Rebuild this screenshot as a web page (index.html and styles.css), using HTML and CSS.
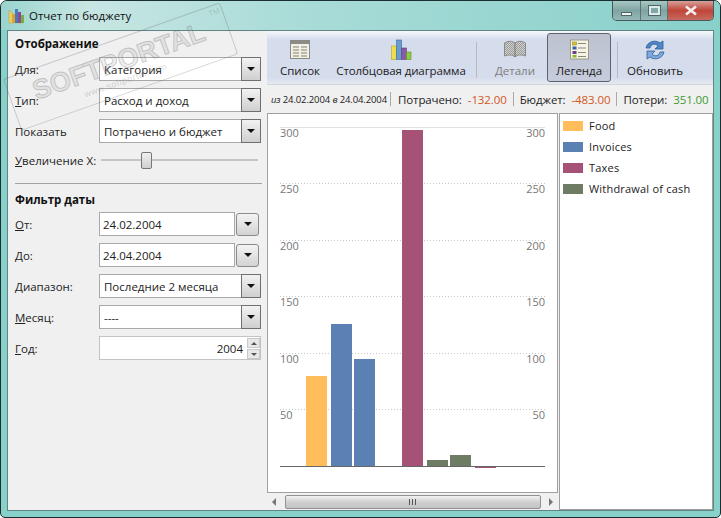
FILE: index.html
```html
<!DOCTYPE html>
<html lang="ru">
<head>
<meta charset="utf-8">
<title>Отчет по бюджету</title>
<link rel="stylesheet" href="styles.css">
</head>
<body>
<div class="window">
  <header class="titlebar">
    <svg class="app-icon" width="18" height="18" viewBox="0 0 18 18"><path d="M1 3v13h14z" fill="#e8d060" stroke="#b8a040" stroke-width=".5"/><rect x="4" y="7" width="3" height="9" fill="#e0a030"/><rect x="7" y="2" width="3" height="14" fill="#4a78b8"/><rect x="10" y="5" width="3" height="11" fill="#8a4a9a"/><rect x="13" y="8" width="3" height="8" fill="#78b040"/></svg>
    <span class="title-text">Отчет по бюджету</span>
    <div class="caption">
      <span class="cap cap-min"><i></i></span>
      <span class="cap cap-max"><i></i></span>
      <span class="cap cap-close">
        <svg width="14" height="11" viewBox="0 0 14 11"><path d="M2 1.500l10 8M12 1.500l-10 8" stroke="#f4eeee" stroke-width="2.600"/></svg>
      </span>
    </div>
  </header>
  <div class="client">
    <aside class="sidebar">
      <h2 class="group-title">Отображение</h2>
      <div class="row"><label class="lbl"><u>Д</u>ля:</label><div class="combo"><span>Категория</span><b class="arrow"></b></div></div>
      <div class="row"><label class="lbl"><u>Т</u>ип:</label><div class="combo"><span>Расход и доход</span><b class="arrow"></b></div></div>
      <div class="row"><label class="lbl">Показать</label><div class="combo"><span>Потрачено и бюджет</span><b class="arrow"></b></div></div>
      <div class="row row-slider"><label class="lbl lbl-wide"><u>У</u>величение X:</label><div class="slider"><i class="thumb"></i></div></div>
      <hr class="divider">
      <h2 class="group-title title-2">Фильтр даты</h2>
      <div class="row"><label class="lbl"><u>О</u>т:</label><div class="date"><span>24.02.2004</span></div><b class="date-btn"></b></div>
      <div class="row"><label class="lbl"><u>Д</u>о:</label><div class="date"><span>24.04.2004</span></div><b class="date-btn"></b></div>
      <div class="row"><label class="lbl"><u>Д</u>иапазон:</label><div class="combo"><span>Последние 2 месяца</span><b class="arrow"></b></div></div>
      <div class="row"><label class="lbl"><u>М</u>есяц:</label><div class="combo"><span>----</span><b class="arrow"></b></div></div>
      <div class="row"><label class="lbl"><u>Г</u>од:</label><div class="spin"><span>2004</span><div class="spin-btns"><b class="up"></b><b class="down"></b></div></div></div>
    </aside>
    <main class="main">
      <nav class="toolbar">
        <div class="tool tool-list">
          <svg width="22" height="21" viewBox="0 0 22 21"><rect x="1.500" y="1.500" width="19" height="18" fill="#f2f0e6" stroke="#8b8b85"/><rect x="2" y="2" width="18" height="3" fill="#8c8c86"/><path d="M4 8h6M12 8h6M4 11h6M12 11h6M4 14h6M12 14h6M4 17h6M12 17h6" stroke="#a8a898" stroke-width="1.500"/></svg>
          <span>Список</span>
        </div>
        <div class="tool tool-chart">
          <svg width="22" height="21" viewBox="0 0 22 21"><rect x="1.500" y="7" width="5" height="13.500" fill="#f0dc50" stroke="#b0a030" stroke-width=".6"/><rect x="6.500" y="1" width="5" height="19.500" fill="#6a9cd0" stroke="#3a6a9a" stroke-width=".6"/><rect x="11.500" y="9" width="5" height="11.500" fill="#8a5aa8" stroke="#604078" stroke-width=".6"/><rect x="16.500" y="13" width="4.500" height="7.500" fill="#90cc40" stroke="#60902a" stroke-width=".6"/></svg>
          <span>Столбцовая диаграмма</span>
        </div>
        <i class="sep sep-1"></i>
        <div class="tool tool-detail muted">
          <svg width="24" height="21" viewBox="0 0 24 21"><defs><pattern id="dither" width="2" height="2" patternUnits="userSpaceOnUse"><rect width="2" height="2" fill="#d2d2d0"/><rect width="1" height="1" fill="#9a9a98"/><rect x="1" y="1" width="1" height="1" fill="#9a9a98"/></pattern></defs><path d="M1.500 4c4-2.500 8-2 10.500 0 2.500-2 6.500-2.500 10.500 0v13c-4-1.500-8-1.500-10.500 1-2.500-2.500-6.500-2.500-10.500-1z" fill="url(#dither)" stroke="#8a8a88"/><path d="M12 4v14" stroke="#777"/></svg>
          <span>Детали</span>
        </div>
        <div class="tool tool-legend active">
          <svg width="21" height="21" viewBox="0 0 21 21"><rect x="1.500" y="1" width="18" height="19" fill="#f6f4e4" stroke="#9a9a88"/><rect x="3.500" y="3" width="4" height="3" fill="#d8c830" stroke="#807820" stroke-width=".5"/><rect x="3.500" y="7.500" width="4" height="3" fill="#3a60a8"/><rect x="3.500" y="12" width="4" height="3" fill="#6a4090"/><rect x="3.500" y="16" width="4" height="2.500" fill="#88b830"/><path d="M9 4.500h8M9 9h8M9 13.500h8M9 17.500h8" stroke="#8a8a80"/></svg>
          <span>Легенда</span>
        </div>
        <i class="sep sep-2"></i>
        <div class="tool tool-refresh">
          <svg width="24" height="22" viewBox="0 0 24 22"><path d="M3 9C4 3 12 0 17 4l3-2v8h-8l3-3C12 4 8 5 7 9z" fill="#4f86c6" stroke="#2f5f9a" stroke-width=".8"/><path d="M21 13c-1 6-9 9-14 5l-3 2v-8h8l-3 3c3 3 7 2 8-2z" fill="#7ea9dc" stroke="#2f5f9a" stroke-width=".8"/></svg>
          <span>Обновить</span>
        </div>
      </nav>
      <div class="infobar">
        <span class="range"><em>из</em> 24.02.2004 <em>в</em> 24.04.2004</span><i class="vsep vsep-first"></i>
        <span>Потрачено:</span><span class="neg val">-132.00</span><i class="vsep"></i>
        <span>Бюджет:</span><span class="neg val">-483.00</span><i class="vsep"></i>
        <span>Потери:</span><span class="pos val">351.00</span>
      </div>
      <div class="panes">
        <section class="chart-pane">
          <div class="chart-box">
            <svg class="chart" width="289" height="378" viewBox="268 114 289 378">
              <g class="grid">
                <path class="gridline-solid" d="M280 127.500H545"/>
                <path class="gridline" d="M280 183.500H545M280 240.500H545M280 296.500H545M280 353.500H545M280 409.500H545"/>
              </g>
              <rect x="306" y="376" width="21" height="91" fill="#ffbd5c"/>
              <rect x="331" y="324" width="21" height="143" fill="#5b80b3"/>
              <rect x="354" y="359" width="21" height="108" fill="#5b80b3"/>
              <rect x="402" y="130" width="21" height="337" fill="#a65277"/>
              <rect x="427" y="460" width="21" height="7" fill="#6d7c63"/>
              <rect x="450" y="455" width="21" height="12" fill="#6d7c63"/>
              <rect x="475" y="466" width="21" height="2" fill="#a65277"/>
              <rect x="497" y="466" width="23" height="1" fill="#c08aa0"/>
              <path d="M280 466.500H545" stroke="#666" fill="none"/>
              <g class="ticks">
                <text x="280" y="137">300</text><text x="280" y="193">250</text><text x="280" y="250">200</text><text x="280" y="306">150</text><text x="280" y="363">100</text><text x="280" y="419">50</text>
              </g>
              <g class="ticks end">
                <text x="545" y="137">300</text><text x="545" y="193">250</text><text x="545" y="250">200</text><text x="545" y="306">150</text><text x="545" y="363">100</text><text x="545" y="419">50</text>
              </g>
            </svg>
          </div>
          <div class="hscroll">
            <b class="sb-arrow sb-left"></b>
            <div class="sb-thumb"><i></i><i></i><i></i></div>
            <b class="sb-arrow sb-right"></b>
          </div>
        </section>
        <section class="legend">
          <div class="legend-item"><i class="sw food"></i><span>Food</span></div>
          <div class="legend-item"><i class="sw inv"></i><span>Invoices</span></div>
          <div class="legend-item"><i class="sw tax"></i><span>Taxes</span></div>
          <div class="legend-item"><i class="sw wd"></i><span>Withdrawal of cash</span></div>
        </section>
      </div>
    </main>
  </div>
  <div class="watermark" aria-hidden="true"><span class="wm-big">SOFTPORTAL</span><span class="wm-small">www.softportal.com</span><span class="wm-tm">TM</span></div>
</div>
</body>
</html>
```
FILE: styles.css
```css
* { box-sizing: border-box; }
html, body { margin: 0; padding: 0; }
body {
  width: 721px; height: 518px; overflow: hidden; background: #fff;
  font: 11.5px "Open Sans", "Noto Sans", sans-serif; color: #222;
}
.window {
  position: relative; width: 721px; height: 518px; overflow: hidden;
  display: flex; flex-direction: column;
  border: 1px solid #1c2f30; border-radius: 7px 7px 5px 5px;
  background: #88d0ca;
  padding: 0 6px 6px;
}
.titlebar {
  flex: 0 0 29px; display: flex; align-items: center;
  margin: 0 -6px; padding: 0 6px;
  background: linear-gradient(90deg, #9ad4cf 0, #c8e6e3 12%, #aadcd8 40%, #88d0ca 100%);
  position: relative;
}
.app-icon { margin: 0 3px 0 1px; }
.title-text { color: #101010; }
.caption {
  margin-left: auto; align-self: flex-start;
  display: flex; height: 20px; border: 1px solid #46595c; border-top: 0;
  border-radius: 0 0 5px 5px; overflow: hidden;
}
.cap { display: flex; align-items: center; justify-content: center; height: 100%; }
.cap-min { width: 28px; background: linear-gradient(#a8c8c4, #7fa5a2 50%, #94b8b5); border-right: 1px solid #5b7472; }
.cap-min i { width: 11px; height: 4px; margin-top: 6px; background: #eef4f4; border: 1px solid #4e6866; }
.cap-max { width: 27px; background: linear-gradient(#a8c8c4, #7fa5a2 50%, #94b8b5); border-right: 1px solid #5b7472; }
.cap-max i { width: 11px; height: 9px; border: 2px solid #dfeaea; outline: 1px solid #4e6866; }
.cap-close { width: 45px; background: linear-gradient(#d8a09a, #c0453a 50%, #c66a5e); }
.client {
  flex: 1; display: flex; min-height: 0;
  background: #f0f0f0; border: 1px solid #5f8584;
}
.sidebar { flex: 0 0 259px; padding: 4px 0 0 7px; }
.group-title { font-size: 11.5px; font-weight: 700; margin: 0 0 5px; height: 17px; line-height: 17px; color: #111; }
.title-2 { margin-top: 7px; margin-bottom: 4px; }
.row { display: flex; align-items: center; height: 24px; margin-bottom: 7px; }
.lbl { flex: 0 0 84px; }
.lbl-wide { white-space: nowrap; }
.combo, .date, .spin {
  height: 24px; background: #fff; border: 1px solid #a9a9a9; display: flex; align-items: center;
  padding-left: 4px;
}
.combo { width: 162px; justify-content: space-between; }
.arrow {
  width: 20px; height: 24px; margin-right: -1px; flex: none;
  border: 1px solid #6f6f6f; background: linear-gradient(#f2f2f2, #cfcfcf);
  display: flex; align-items: center; justify-content: center;
}
.arrow::after, .date-btn::after {
  content: ""; border: 4px solid transparent; border-top: 4px solid #111; border-bottom: 0;
}
.date { width: 136px; padding-left: 3px; }
.date-btn {
  width: 23px; height: 23px; margin-left: 1px; border: 1px solid #8a8a8a; border-radius: 3px;
  background: linear-gradient(#f4f4f4, #d2d2d2);
  display: flex; align-items: center; justify-content: center;
}
.spin { width: 162px; justify-content: flex-end; padding: 0; border-color: #c4c4c4; }
.spin span { margin-right: 4px; }
.spin-btns { width: 13px; height: 100%; display: flex; flex-direction: column; gap: 1px; padding: 1px 0 0; }
.spin-btns b { flex: 1; background: #e8e8e8; border: 1px solid #c9c9c9; display: flex; align-items: center; justify-content: center; }
.up::after { content: ""; border: 3px solid transparent; border-bottom: 3px solid #555; border-top: 0; }
.down::after { content: ""; border: 3px solid transparent; border-top: 3px solid #555; border-bottom: 0; }
.row-slider { height: 20px; margin-bottom: 13px; }
.slider { position: relative; width: 157px; height: 2px; margin-left: 2px; background: #c6c6c6; }
.thumb {
  position: absolute; left: 40px; top: -7px; width: 11px; height: 17px;
  border: 1px solid #777; border-radius: 2px; background: linear-gradient(#f0f0f0, #cfcfcf);
}
.divider { border: 0; border-top: 1px solid #a3a3a3; margin: 0 5px 0 0; }
.main { flex: 1; display: flex; flex-direction: column; min-width: 0; }
.toolbar {
  flex: 0 0 54px; display: flex; align-items: flex-start;
  padding: 2px 0 0;
  background: linear-gradient(#f6f8fb 0, #d5dcec 16%, #d5dcec 88%, #e6e9f1 100%);
  border-bottom: 1px solid #d2d6de;
}
.tool {
  flex: none; display: flex; flex-direction: column; align-items: center; justify-content: space-between;
  height: 48px; padding: 6px 0 3px; color: #1a1a1a; white-space: nowrap;
}
.tool-list { width: 64px; margin-left: 1px; }
.tool-chart { width: 134px; margin-left: 2px; letter-spacing: -.1px; }
.sep { width: 1px; height: 36px; margin-top: 9px; background: #b5bac5; flex: none; }
.sep-1 { margin-left: 8px; }
.muted { color: #7c7c7c; }
.tool-detail { width: 62px; margin-left: 7px; }
.tool-legend {
  width: 64px; margin-left: 1px; height: 49px; padding-top: 5px; margin-top: 0;
  background: linear-gradient(#bcc2d0, #c6ccdb); border: 1px solid #5d6470; border-radius: 3px;
}
.sep-2 { margin-left: 6px; }
.tool-refresh { width: 74px; }
.infobar {
  flex: 0 0 28px; display: flex; align-items: center; padding: 0 0 0 4px;
  white-space: nowrap; background: #f0f0f0; color: #222; letter-spacing: -.1px;
}
.range { font-size: 9.5px; letter-spacing: -.12px; }
.range em { font-style: italic; }
.vsep { width: 1px; height: 14px; background: #a8a8a8; margin: 0 6px 0 6px; flex: none; }
.vsep-first { margin: 0 7px 0 3px; }
.val { margin-left: 6px; }
.neg { color: #d2571d; }
.pos { color: #3d9a36; }
.panes { flex: 1; display: flex; min-height: 0; gap: 1px; }
.chart-pane { flex: 0 0 291px; display: flex; flex-direction: column; }
.chart-box { flex: 0 0 380px; border: 1px solid #a0a0a0; background: #fff; }
.chart { display: block; }
.gridline { stroke: #c8c8c8; stroke-dasharray: 1 2; fill: none; }
.gridline-solid { stroke: #e2e2e2; fill: none; }
.ticks text { font: 11px "Open Sans", sans-serif; fill: #777; }
.ticks.end text { text-anchor: end; }
.hscroll { flex: 1; display: flex; align-items: center; justify-content: space-between; padding: 0 5px; background: #f0f0f0; }
.sb-arrow { width: 0; height: 0; border: 4px solid transparent; flex: none; }
.sb-left { border-right-color: #777; border-left: 0; }
.sb-right { border-left-color: #777; border-right: 0; }
.sb-thumb {
  width: 256px; height: 14px; border: 1px solid #909090; border-radius: 2px;
  background: linear-gradient(#f2f2f2, #d0d0d0 50%, #c4c4c4);
  display: flex; align-items: center; justify-content: center; gap: 1px;
}
.sb-thumb i { width: 1px; height: 6px; background: #555; margin: 0 1px 0 0; }
.legend { flex: 1; background: #fff; border: 1px solid #a0a0a0; padding: 1px 0 0 3px; }
.legend-item { display: flex; align-items: center; height: 21px; font-size: 11px; letter-spacing: .2px; color: #222; }
.sw { width: 20px; height: 10px; margin-right: 6px; flex: none; }
.food { background: #ffbd5c; }
.inv { background: #5b80b3; }
.tax { background: #a65277; }
.wd { background: #6d7c63; }
.watermark {
  position: absolute; left: 2px; top: 78px; transform: rotate(-19.5deg); transform-origin: 0 0;
  width: 230px; height: 55px; border: 1px solid rgba(110,110,110,.3); border-radius: 3px; pointer-events: none;
  display: flex; flex-direction: column; align-items: center; justify-content: center;
  color: rgba(120,120,120,.3);
}
.wm-big {
  font: 700 27px/29px "Liberation Sans", sans-serif; color: rgba(150,150,150,.18);
  -webkit-text-stroke: 1px rgba(110,110,110,.32);
}
.wm-small { font: 9px/11px "Liberation Sans", sans-serif; letter-spacing: .5px; }
.wm-tm { position: absolute; right: 2px; top: 2px; font: 8px/10px "Liberation Sans", sans-serif; }
```
